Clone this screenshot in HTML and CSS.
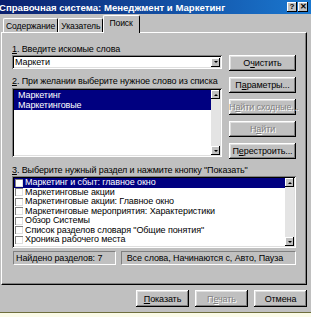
FILE: index.html
```html
<!DOCTYPE html>
<html lang="ru">
  <head>
    <meta charset="UTF-8" />
    <title>Справочная система</title>
    <link rel="stylesheet" href="styles.css">
  </head>
  <body>
    <div class="window">
      <div class="titlebar">
        <span class="title">Справочная система: Менеджмент и Маркетинг</span>
        <div class="title-btns">
          <span class="tbtn">?</span>
          <span class="tbtn">✕</span>
        </div>
      </div>

      <div class="tabs">
        <span class="tab">Содержание</span>
        <span class="tab">Указатель</span>
        <span class="tab active">Поиск</span>
      </div>

      <div class="panel">
        <div class="top">
          <div class="left">
            <div class="label"><u>1</u>. Введите искомые слова</div>
            <div class="combo">
              <span class="combo-text">Маркети</span>
              <span class="arrow-btn"><span class="tri down"></span></span>
            </div>
            <div class="label"><u>2</u>. При желании выберите нужное слово из списка</div>
            <div class="list words">
              <div class="items">
                <div class="item sel">Маркетинг</div>
                <div class="item sel">Маркетинговые</div>
              </div>
              <div class="scroll">
                <span class="arrow-btn"><span class="tri up"></span></span>
                <span class="track"></span>
                <span class="arrow-btn"><span class="tri down"></span></span>
              </div>
            </div>
          </div>
          <div class="btncol">
            <button class="btn">О<u>ч</u>истить</button>
            <button class="btn">П<u>а</u>раметры...</button>
            <button class="btn disabled">Н<u>а</u>йти сходные...</button>
            <button class="btn disabled">Н<u>а</u>йти</button>
            <button class="btn">П<u>е</u>рестроить...</button>
          </div>
        </div>

        <div class="label third"><u>3</u>. Выберите нужный раздел и нажмите кнопку "Показать"</div>
        <div class="list topics">
          <div class="items">
            <div class="item sel"><span class="check"></span>Маркетинг и сбыт: главное окно</div>
            <div class="item"><span class="check"></span>Маркетинговые акции</div>
            <div class="item"><span class="check"></span>Маркетинговые акции: Главное окно</div>
            <div class="item"><span class="check"></span>Маркетинговые мероприятия: Характеристики</div>
            <div class="item"><span class="check"></span>Обзор Системы</div>
            <div class="item"><span class="check"></span>Список разделов словаря "Общие понятия"</div>
            <div class="item"><span class="check"></span>Хроника рабочего места</div>
          </div>
          <div class="scroll">
            <span class="arrow-btn"><span class="tri up"></span></span>
            <span class="track"></span>
            <span class="arrow-btn"><span class="tri down"></span></span>
          </div>
        </div>

        <div class="status-row">
          <div class="status found">Найдено разделов: 7</div>
          <div class="status opts">Все слова, Начинаются с, Авто, Пауза</div>
        </div>
      </div>

      <div class="footer">
        <button class="btn wide"><u>П</u>оказать</button>
        <button class="btn wide disabled">П<u>е</u>чать</button>
        <button class="btn wide">Отмена</button>
      </div>
      <div class="strip"></div>
    </div>
  </body>
</html>
```

FILE: styles.css
```css
* {
  margin: 0;
  padding: 0;
  box-sizing: border-box;
}

body {
  width: 311px;
  height: 317px;
  overflow: hidden;
  background-color: #c0c0c0;
  font-family: "Liberation Sans", Arial, sans-serif;
  font-size: 9px;
  letter-spacing: -0.1px;
  color: #000;
}

.window {
  display: flex;
  flex-direction: column;
  height: 317px;
}

/* Title bar */
.titlebar {
  height: 14px;
  display: flex;
  align-items: center;
  justify-content: space-between;
  background: linear-gradient(to right, #0a1f6e, #1a78d0);
  color: #fff;
}

.title {
  font-weight: bold;
  font-size: 9.6px;
  letter-spacing: 0;
  margin-left: -1px;
  white-space: nowrap;
}

.title-btns {
  display: flex;
  gap: 1px;
  margin-right: 3px;
}

.tbtn {
  width: 10px;
  height: 10px;
  background-color: #c0c0c0;
  color: #000;
  font-size: 8px;
  font-weight: bold;
  line-height: 10px;
  text-align: center;
  box-shadow: inset -1px -1px #000, inset 1px 1px #fff;
}

/* Tabs */
.tabs {
  display: flex;
  align-items: flex-end;
  height: 18px;
  padding-left: 3px;
}

.tab {
  height: 15px;
  line-height: 14px;
  padding: 0 2px;
  font-size: 8.6px;
  border-top: 1px solid #fff;
  border-left: 1px solid #fff;
  border-right: 1px solid #000;
  border-radius: 2px 2px 0 0;
  margin-bottom: -1px;
}

.tab.active {
  height: 18px;
  line-height: 15px;
  padding: 0 6px 0 5px;
  background-color: #c0c0c0;
  position: relative;
  z-index: 1;
}

/* Panel */
.panel {
  width: 306px;
  margin-left: 1px;
  height: 253px;
  border-top: 1px solid #fff;
  border-left: 1px solid #fff;
  border-right: 1px solid #000;
  border-bottom: 1px solid #000;
  box-shadow: inset -1px -1px #808080;
  padding: 10px 10px 0 10px;
}

.top {
  display: flex;
  gap: 7px;
}

.left {
  width: 211px;
}

.label {
  height: 12px;
  line-height: 12px;
  white-space: nowrap;
}

.label.third {
  margin-top: 5px;
}

.combo {
  height: 14px;
  margin-bottom: 6px;
  display: flex;
  align-items: center;
  justify-content: space-between;
  background-color: #fff;
  padding: 2px 2px 2px 3px;
  box-shadow: inset 1px 1px #808080, inset -1px -1px #fff, inset 2px 2px #000, inset -2px -2px #dfdfdf;
}

.arrow-btn {
  width: 9px;
  height: 9px;
  display: flex;
  align-items: center;
  justify-content: center;
  background-color: #c0c0c0;
  box-shadow: inset -1px -1px #000, inset 1px 1px #fff;
}

.tri {
  width: 0;
  height: 0;
  border-left: 2px solid transparent;
  border-right: 2px solid transparent;
}

.tri.down {
  border-top: 2px solid #000;
}

.tri.up {
  border-bottom: 2px solid #000;
}

/* Lists */
.list {
  display: flex;
  background-color: #fff;
  padding: 2px;
  box-shadow: inset 1px 1px #808080, inset -1px -1px #fff, inset 2px 2px #000, inset -2px -2px #dfdfdf;
}

.list .items {
  flex: 1;
}

.words {
  height: 69px;
  margin-top: 1px;
}

.words .item {
  height: 10px;
  line-height: 10px;
  padding-left: 4px;
}

.item.sel {
  background-color: #000080;
  color: #fff;
}

.scroll {
  width: 9px;
  display: flex;
  flex-direction: column;
}

.track {
  flex: 1;
  background-color: #e4e4e4;
}

.topics {
  height: 72px;
  margin-bottom: 3px;
}

.topics .item {
  height: 9.5px;
  line-height: 9.5px;
  display: flex;
  align-items: center;
  white-space: nowrap;
}

.check {
  width: 8px;
  height: 8px;
  margin: 0 2px 0 1px;
  background-color: #fff;
  box-shadow: inset 1px 1px #808080, inset -1px -1px #dfdfdf;
}

/* Buttons */
.btncol {
  width: 67px;
  display: flex;
  flex-direction: column;
  gap: 6px;
  padding-top: 12px;
}

.btn {
  height: 16px;
  font-family: inherit;
  font-size: 9px;
  letter-spacing: -0.1px;
  color: #000;
  background-color: #c0c0c0;
  border: none;
  box-shadow: inset -1px -1px #000, inset 1px 1px #fff, inset -2px -2px #808080, inset 2px 2px #dfdfdf;
  white-space: nowrap;
}

.btn.disabled {
  color: #808080;
  text-shadow: 1px 1px #fff;
}

.status-row {
  display: flex;
  gap: 5px;
  padding-left: 1px;
}

.status {
  height: 14px;
  line-height: 12px;
  padding-left: 2px;
  border-top: 1px solid #808080;
  border-left: 1px solid #808080;
  border-bottom: 1px solid #fff;
  border-right: 1px solid #fff;
  white-space: nowrap;
}

.found {
  width: 103px;
}

.opts {
  width: 176px;
  padding-left: 5px;
}

/* Footer */
.footer {
  display: flex;
  justify-content: flex-end;
  gap: 6px;
  padding: 5px 4px 0 0;
}

.btn.wide {
  width: 53px;
  height: 17px;
}

.strip {
  margin-top: auto;
  height: 5px;
  border-top: 1px solid #6e6e3c;
  background-color: #fbfbe8;
}
```
